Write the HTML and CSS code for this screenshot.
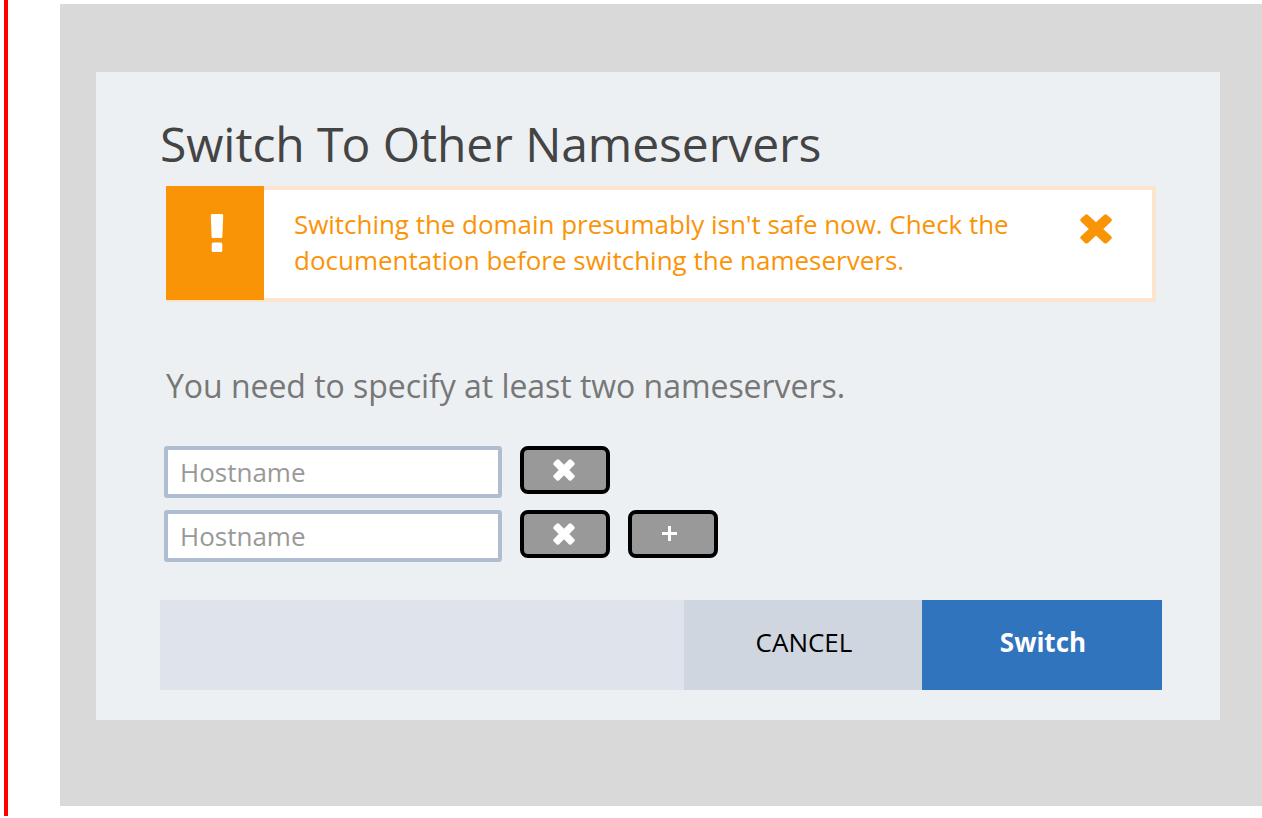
FILE: index.html
```html
<!DOCTYPE html>
<html lang="en">
<head>
<meta charset="utf-8">
<title>Switch To Other Nameservers</title>
<link rel="stylesheet" href="styles.css">
</head>
<body>
<div class="frame">
  <main class="backdrop">
    <section class="dialog">
      <h1 class="title">Switch <span class="kern">T</span>o Other Nameservers</h1>
      <div class="alert">
        <div class="alert-mark">
          <svg class="bang" viewBox="0 0 14 38"><path d="M2 0H12Q13.200 0 13.200 1.500L12.400 22.500Q12.300 24 11 24H3Q1.700 24 1.600 22.500L.8 1.500Q.8 0 2 0ZM3.200 28.500H10.800Q12.300 28.500 12.300 30V36.500Q12.300 38 10.800 38H3.200Q1.700 38 1.700 36.500V30Q1.700 28.500 3.200 28.500Z"/></svg>
        </div>
        <p class="alert-text"><span class="tight">Switching the domain presumably isn't safe now. Check the</span><br>documentation before switching the nameservers.</p>
        <svg class="alert-close" viewBox="0 0 32 30"><path d="M1 4.500 5 .9Q6.500-.2 8 .9L16 8.200 24 .9Q25.500-.2 27 .9L31.200 4.600Q32.400 6 31.200 7.400L23.300 15 31.200 22.300Q32.400 23.700 31.200 25.100L27 29Q25.500 30.200 24 29L16 21.500 8 29Q6.500 30.200 5 29L.9 25.100Q-.4 23.700 .9 22.300L8.800 15 .9 7.400Q-.4 6 1 4.500Z"/></svg>
      </div>
      <p class="hint">You need to specify at least two nameservers.</p>
      <div class="row">
        <input class="host" type="text" placeholder="Hostname">
        <button class="action" aria-label="Remove"><svg class="remove" viewBox="0 0 22 22"><path d="M.8 3.500 3.500.8Q4.800-.3 6.100.8L11 5.700 15.900.8Q17.200-.3 18.500.8L21.200 3.500Q22.300 4.800 21.200 6.100L16.300 11 21.200 15.900Q22.300 17.200 21.200 18.500L18.500 21.200Q17.200 22.300 15.900 21.200L11 16.300 6.100 21.200Q4.800 22.300 3.500 21.200L.8 18.500Q-.3 17.200 .8 15.900L5.700 11 .8 6.100Q-.3 4.800 .8 3.500Z"/></svg></button>
      </div>
      <div class="row">
        <input class="host" type="text" placeholder="Hostname">
        <button class="action" aria-label="Remove"><svg class="remove" viewBox="0 0 22 22"><path d="M.8 3.500 3.500.8Q4.800-.3 6.100.8L11 5.700 15.900.8Q17.200-.3 18.500.8L21.200 3.500Q22.300 4.800 21.200 6.100L16.300 11 21.200 15.900Q22.300 17.200 21.200 18.500L18.500 21.200Q17.200 22.300 15.900 21.200L11 16.300 6.100 21.200Q4.800 22.300 3.500 21.200L.8 18.500Q-.3 17.200 .8 15.900L5.700 11 .8 6.100Q-.3 4.800 .8 3.500Z"/></svg></button>
        <button class="action action-add" aria-label="Add"><svg class="add" viewBox="0 0 15 15"><path d="M6 0H9V6H15V9H9V15H6V9H0V6H6Z"/></svg></button>
      </div>
      <footer class="footer">
        <button class="cancel">CANCEL</button>
        <button class="submit">Switch</button>
      </footer>
    </section>
  </main>
</div>
</body>
</html>
```
FILE: styles.css
```css
* { box-sizing: border-box; }

body {
  margin: 0;
  height: 818px;
  overflow: hidden;
  background: #fff;
  font-family: "Open Sans", "Noto Sans", sans-serif;
}

.frame {
  height: 816px;
  margin-left: 4px;
  padding: 4px 0 10px 52px;
  border-left: 4px solid #f00;
}

.backdrop {
  height: 802px;
  padding: 68px 42px 86px 36px;
  background: #d9d9d9;
}

.dialog {
  height: 648px;
  padding: 42px 58px 30px 64px;
  background: #ecf0f3;
}

.title {
  margin: 0;
  height: 72px;
  color: #444;
  font-size: 48px;
  font-weight: 400;
  line-height: 60px;
  letter-spacing: -0.08px;
  white-space: nowrap;
}

.kern { letter-spacing: -2px; }

.alert {
  display: flex;
  width: 990px;
  height: 116px;
  margin-left: 6px;
  border: 4px solid #fce5cd;
  border-radius: 2px;
  background: #fff;
}

.alert-mark {
  display: flex;
  justify-content: center;
  width: 98px;
  height: 114px;
  margin: -4px 0 0 -4px;
  padding: 28px 0 0 3px;
  background: #fa9407;
}

.bang {
  width: 14px;
  height: 38px;
  fill: #fff;
}

.alert-text {
  flex: 1;
  margin: 0;
  padding: 16px 0 0 30px;
  color: #fa9407;
  font-size: 26px;
  line-height: 36px;
  white-space: nowrap;
}

.tight { letter-spacing: -0.035px; }

.alert-close {
  width: 32px;
  height: 30px;
  margin: 24px 40px 0 0;
  fill: #fa9407;
}

.hint {
  margin: 62px 0 38px 6px;
  color: #777;
  font-size: 32px;
  line-height: 44px;
  letter-spacing: -0.04px;
  white-space: nowrap;
}

.row {
  display: flex;
  gap: 18px;
  height: 52px;
  margin: 0 0 12px 4px;
}

.host {
  width: 338px;
  height: 52px;
  padding: 0 12px;
  border: 4px solid #afbdd1;
  border-radius: 3px;
  background: #fff;
  font: 26px "Open Sans", "Noto Sans", sans-serif;
}

.host::placeholder { color: #999; opacity: 1; }

.action {
  display: flex;
  align-items: center;
  justify-content: center;
  width: 90px;
  height: 48px;
  padding: 0 3px 0 0;
  border: 4px solid #000;
  border-radius: 8px;
  background: #999;
}

.action-add { padding: 0 7px 1px 0; }

.remove {
  width: 22px;
  height: 22px;
  fill: #fff;
}

.add {
  width: 15px;
  height: 15px;
  fill: #fff;
}

.footer {
  display: flex;
  justify-content: flex-end;
  height: 90px;
  margin-top: 38px;
  background: #dfe3eb;
}

.cancel,
.submit {
  padding: 0 0 7px 2px;
  border: 0;
  font: 26px "Open Sans", "Noto Sans", sans-serif;
}

.cancel {
  width: 238px;
  background: #cfd6e0;
  color: #000;
}

.submit {
  width: 240px;
  background: #2f74bc;
  color: #fff;
  font-weight: 700;
}
```
